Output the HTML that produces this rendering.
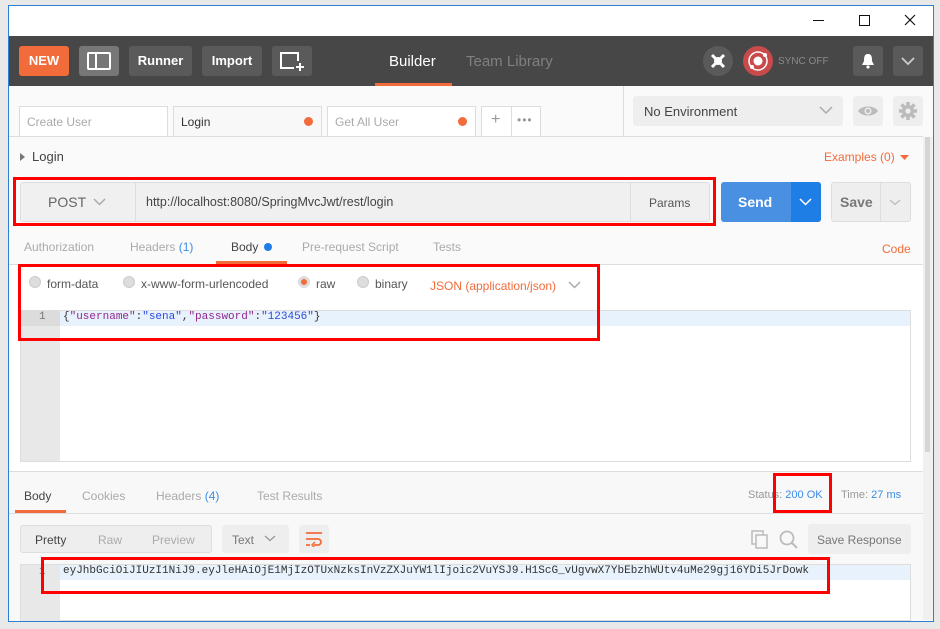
<!DOCTYPE html>
<html><head><style>
*{box-sizing:border-box;margin:0;padding:0}
body{width:940px;height:629px;background:#e9e9e9;font-family:"Liberation Sans",sans-serif;position:relative;overflow:hidden;font-size:12px;color:#505050}
.a{position:absolute}
.btn{position:absolute;height:30px;background:#5a5a5a;border-radius:3px;color:#fff;font-weight:bold;font-size:13px;text-align:center;line-height:30px}
.t{position:absolute;white-space:nowrap}
.rb{position:absolute;border:3px solid #f00}
.radio{position:absolute;width:12px;height:12px;border-radius:50%;background:#ddd;border:1px solid #ccc}
</style></head><body>
<div class="a" style="left:8px;top:5px;width:926px;height:617px;border:1px solid #2b7fd4;background:#fafafa"></div>
<div class="a" style="left:9px;top:6px;width:924px;height:30px;background:#fff"></div>
<div class="a" style="left:813px;top:20px;width:11px;height:1px;background:#111"></div>
<div class="a" style="left:859px;top:15px;width:11px;height:11px;border:1px solid #111"></div>
<svg class="a" style="left:904px;top:14px" width="12" height="12"><path d="M1 1L11 11M11 1L1 11" stroke="#111" stroke-width="1.2"/></svg>
<div class="a" style="left:9px;top:36px;width:924px;height:50px;background:#474747"></div>
<div class="btn" style="left:19px;top:46px;width:50px;background:#f26b3a">NEW</div>
<div class="btn" style="left:79px;top:46px;width:40px;background:#777"><div class="a" style="left:8px;top:6px;width:24px;height:18px;border:2px solid #fff;border-radius:2px"></div><div class="a" style="left:16px;top:7px;width:2px;height:16px;background:#fff"></div></div>
<div class="btn" style="left:129px;top:46px;width:63px">Runner</div>
<div class="btn" style="left:202px;top:46px;width:60px">Import</div>
<div class="btn" style="left:272px;top:46px;width:40px"><svg class="a" style="left:8px;top:6px" width="26" height="20"><path d="M14 16H1V1H18V9" stroke="#fff" stroke-width="2" fill="none"/><path d="M20 11v8M16 15h8" stroke="#fff" stroke-width="2"/></svg></div>
<div class="t" style="left:389px;top:53px;color:#fff;font-size:15px">Builder</div>
<div class="a" style="left:375px;top:83px;width:77px;height:3px;background:#f26b3a"></div>
<div class="t" style="left:466px;top:53px;color:#808080;font-size:15px">Team Library</div>
<div class="a" style="left:703px;top:46px;width:30px;height:30px;border-radius:50%;background:#5a5a5a"></div>
<svg class="a" style="left:703px;top:46px" width="30" height="30"><path d="M9 9L21 21M21 9L9 21" stroke="#fff" stroke-width="3"/><circle cx="15" cy="15" r="4" fill="#fff"/></svg>
<div class="a" style="left:743px;top:46px;width:30px;height:30px;border-radius:50%;background:#c94a4a"></div>
<svg class="a" style="left:743px;top:46px" width="30" height="30"><circle cx="15" cy="15" r="9" stroke="#fff" stroke-width="1.5" fill="none"/><circle cx="15" cy="15" r="4.5" fill="#fff"/><circle cx="22" cy="9" r="2" fill="#fff"/><circle cx="9" cy="21" r="2" fill="#fff"/></svg>
<div class="t" style="left:778px;top:56px;color:#8a8a8a;font-size:10px">SYNC OFF</div>
<div class="btn" style="left:853px;top:46px;width:30px"><svg class="a" style="left:8px;top:7px" width="14" height="16"><path d="M7 1C3 1 3 5 3 8L1 12H13L11 8C11 5 11 1 7 1Z" fill="#fff"/><circle cx="7" cy="14" r="1.6" fill="#fff"/></svg></div>
<div class="btn" style="left:893px;top:46px;width:30px"><svg class="a" style="left:8px;top:10px" width="14" height="10"><path d="M1 2L7 8L13 2" stroke="#ccc" stroke-width="1.8" fill="none"/></svg></div>
<div class="a" style="left:19px;top:106px;width:149px;height:31px;background:#fff;border:1px solid #ddd;border-bottom:none"></div>
<div class="t" style="left:27px;top:115px;color:#aaa">Create User</div>
<div class="a" style="left:173px;top:106px;width:149px;height:31px;background:#f8f8f8;border:1px solid #ddd;border-bottom:none"></div>
<div class="t" style="left:181px;top:115px;color:#333">Login</div>
<div class="a" style="left:304px;top:117px;width:9px;height:9px;border-radius:50%;background:#f26b3a"></div>
<div class="a" style="left:327px;top:106px;width:149px;height:31px;background:#fff;border:1px solid #ddd;border-bottom:none"></div>
<div class="t" style="left:335px;top:115px;color:#aaa">Get All User</div>
<div class="a" style="left:458px;top:117px;width:9px;height:9px;border-radius:50%;background:#f26b3a"></div>
<div class="a" style="left:481px;top:106px;width:60px;height:31px;background:#fff;border:1px solid #ddd;border-bottom:none"></div>
<div class="a" style="left:511px;top:106px;width:1px;height:31px;background:#ddd"></div>
<div class="t" style="left:491px;top:111px;color:#999;font-size:16px">+</div>
<div class="t" style="left:517px;top:113px;color:#999;font-size:12px;letter-spacing:1px">•••</div>
<div class="a" style="left:623px;top:86px;width:1px;height:51px;background:#ddd"></div>
<div class="a" style="left:9px;top:136px;width:914px;height:1px;background:#ddd"></div>
<div class="a" style="left:633px;top:96px;width:210px;height:30px;background:#eee;border-radius:3px"></div>
<div class="t" style="left:644px;top:104px;color:#444;font-size:13px">No Environment</div>
<svg class="a" style="left:819px;top:106px" width="14" height="9"><path d="M1 1L7 7L13 1" stroke="#aaa" stroke-width="1.5" fill="none"/></svg>
<div class="a" style="left:853px;top:96px;width:30px;height:30px;background:#eee;border-radius:3px"></div>
<svg class="a" style="left:857px;top:104px" width="22" height="14"><path d="M1 7C5 1 17 1 21 7C17 13 5 13 1 7Z" fill="#bbb"/><circle cx="11" cy="7" r="3.5" fill="#eee"/><circle cx="11" cy="7" r="2" fill="#bbb"/></svg>
<div class="a" style="left:893px;top:96px;width:30px;height:30px;background:#eee;border-radius:3px"></div>
<svg class="a" style="left:899px;top:102px" width="18" height="18"><circle cx="9" cy="9" r="6" fill="#bbb"/><path d="M9 0v18M0 9h18M2.5 2.5l13 13M15.5 2.5l-13 13" stroke="#bbb" stroke-width="3.5"/><circle cx="9" cy="9" r="2.6" fill="#eee"/></svg>
<div class="a" style="left:923px;top:137px;width:10px;height:483px;background:#f0f0f0"></div>
<div class="a" style="left:925px;top:137px;width:5px;height:315px;background:#d5d5d5"></div>
<svg class="a" style="left:20px;top:153px" width="6" height="8"><path d="M0 0L5 4L0 8Z" fill="#777"/></svg>
<div class="t" style="left:32px;top:149px;color:#444;font-size:13px">Login</div>
<div class="t" style="left:824px;top:150px;color:#f26b3a;font-size:12px">Examples (0)</div>
<svg class="a" style="left:900px;top:155px" width="9" height="6"><path d="M0 0H9L4.5 5Z" fill="#f26b3a"/></svg>
<div class="a" style="left:20px;top:182px;width:690px;height:40px;background:#f0f0f0;border:1px solid #ddd;border-radius:3px"></div>
<div class="a" style="left:135px;top:182px;width:1px;height:40px;background:#ddd"></div>
<div class="a" style="left:630px;top:182px;width:1px;height:40px;background:#ddd"></div>
<div class="t" style="left:48px;top:194px;color:#666;font-size:14px">POST</div>
<svg class="a" style="left:93px;top:198px" width="13" height="8"><path d="M1 1L6.5 6.5L12 1" stroke="#aaa" stroke-width="1.5" fill="none"/></svg>
<div class="t" style="left:146px;top:195px;color:#444;font-size:12.5px">http://localhost:8080/SpringMvcJwt/rest/login</div>
<div class="t" style="left:649px;top:196px;color:#555;font-size:12px">Params</div>
<div class="rb" style="left:13px;top:177px;width:703px;height:49px"></div>
<div class="a" style="left:721px;top:182px;width:100px;height:40px;background:#4a90e2;border-radius:3px"></div>
<div class="a" style="left:791px;top:182px;width:30px;height:40px;background:#1f7ee6;border-radius:0 3px 3px 0"></div>
<div class="t" style="left:738px;top:194px;color:#fff;font-size:14px;font-weight:bold">Send</div>
<svg class="a" style="left:799px;top:198px" width="13" height="8"><path d="M1 1L6.5 6.5L12 1" stroke="#fff" stroke-width="1.5" fill="none"/></svg>
<div class="a" style="left:831px;top:182px;width:80px;height:40px;background:#eee;border:1px solid #ddd;border-radius:3px"></div>
<div class="a" style="left:880px;top:182px;width:1px;height:40px;background:#ddd"></div>
<div class="t" style="left:840px;top:194px;color:#777;font-size:14px;font-weight:bold">Save</div>
<svg class="a" style="left:889px;top:199px" width="12" height="7"><path d="M1 1L6 5.5L11 1" stroke="#bbb" stroke-width="1.2" fill="none"/></svg>
<div class="t" style="left:24px;top:240px;color:#aaa">Authorization</div>
<div class="t" style="left:130px;top:240px;color:#aaa">Headers <span style="color:#3a8ee6">(1)</span></div>
<div class="t" style="left:231px;top:240px;color:#444">Body</div>
<div class="a" style="left:264px;top:243px;width:8px;height:8px;border-radius:50%;background:#1f7ee6"></div>
<div class="t" style="left:302px;top:240px;color:#aaa">Pre-request Script</div>
<div class="t" style="left:433px;top:240px;color:#aaa">Tests</div>
<div class="t" style="left:882px;top:242px;color:#f26b3a">Code</div>
<div class="a" style="left:216px;top:261px;width:71px;height:3px;background:#f26b3a"></div>
<div class="a" style="left:9px;top:264px;width:914px;height:1px;background:#ddd"></div>
<div class="a" style="left:9px;top:265px;width:914px;height:206px;background:#fff"></div>
<div class="radio" style="left:29px;top:276px"></div><div class="t" style="left:47px;top:277px;color:#555">form-data</div>
<div class="radio" style="left:123px;top:276px"></div><div class="t" style="left:141px;top:277px;color:#555">x-www-form-urlencoded</div>
<div class="radio" style="left:298px;top:276px;background:#f26b3a;border:3px solid #ddd"></div><div class="t" style="left:316px;top:277px;color:#555">raw</div>
<div class="radio" style="left:357px;top:276px"></div><div class="t" style="left:375px;top:277px;color:#555">binary</div>
<div class="t" style="left:430px;top:279px;color:#f26b3a">JSON (application/json)</div>
<svg class="a" style="left:568px;top:281px" width="13" height="8"><path d="M1 1L6.5 6.5L12 1" stroke="#aaa" stroke-width="1.5" fill="none"/></svg>
<div class="a" style="left:20px;top:310px;width:891px;height:152px;border:1px solid #ddd;background:#fff"></div>
<div class="a" style="left:21px;top:311px;width:39px;height:150px;background:#e8e8e8"></div>
<div class="a" style="left:60px;top:311px;width:850px;height:15px;background:#e8f2fc"></div>
<div class="a" style="left:21px;top:311px;width:39px;height:15px;background:#dcdcdc"></div>
<div class="t" style="left:39px;top:311px;color:#777;font-family:'Liberation Mono',monospace;font-size:11px">1</div>
<div class="t" style="left:63px;top:311px;font-family:'Liberation Mono',monospace;font-size:11px;color:#333">{<span style="color:#92278f">"username"</span>:<span style="color:#2a4ae0">"sena"</span>,<span style="color:#92278f">"password"</span>:<span style="color:#2a4ae0">"123456"</span>}</div>
<div class="rb" style="left:18px;top:264px;width:582px;height:77px"></div>
<div class="a" style="left:9px;top:471px;width:914px;height:1px;background:#ddd"></div>
<div class="a" style="left:9px;top:472px;width:914px;height:148px;background:#f8f8f8"></div>
<div class="t" style="left:24px;top:489px;color:#444">Body</div>
<div class="t" style="left:82px;top:489px;color:#aaa">Cookies</div>
<div class="t" style="left:156px;top:489px;color:#aaa">Headers <span style="color:#3a8ee6">(4)</span></div>
<div class="t" style="left:257px;top:489px;color:#aaa">Test Results</div>
<div class="a" style="left:15px;top:510px;width:51px;height:3px;background:#f26b3a"></div>
<div class="a" style="left:9px;top:513px;width:914px;height:1px;background:#ddd"></div>
<div class="t" style="left:748px;top:489px;color:#999;font-size:11px">Status: <span style="color:#3a8ee6">200 OK</span></div>
<div class="t" style="left:841px;top:489px;color:#999;font-size:11px">Time: <span style="color:#3a8ee6">27 ms</span></div>
<div class="rb" style="left:773px;top:473px;width:59px;height:40px"></div>
<div class="a" style="left:20px;top:525px;width:192px;height:28px;background:#eee;border:1px solid #ddd;border-radius:3px"></div>
<div class="t" style="left:35px;top:533px;color:#444">Pretty</div>
<div class="t" style="left:98px;top:533px;color:#aaa">Raw</div>
<div class="t" style="left:152px;top:533px;color:#aaa">Preview</div>
<div class="a" style="left:222px;top:525px;width:67px;height:28px;background:#eee;border-radius:3px"></div>
<div class="t" style="left:232px;top:533px;color:#777">Text</div>
<svg class="a" style="left:264px;top:535px" width="12" height="7"><path d="M1 1L6 5.5L11 1" stroke="#999" stroke-width="1.3" fill="none"/></svg>
<div class="a" style="left:299px;top:525px;width:30px;height:28px;background:#eee;border-radius:3px"></div>
<svg class="a" style="left:305px;top:531px" width="18" height="16"><path d="M1 2H17M1 8H13a3 3 0 0 1 0 6H9M1 14H5" stroke="#f26b3a" stroke-width="1.8" fill="none"/><path d="M10 11L7 14L10 17" stroke="#f26b3a" stroke-width="1.5" fill="none"/></svg>
<svg class="a" style="left:751px;top:530px" width="18" height="19"><rect x="1" y="1" width="11" height="13" fill="none" stroke="#bbb" stroke-width="1.5"/><rect x="5" y="5" width="11" height="13" fill="#f8f8f8" stroke="#bbb" stroke-width="1.5"/></svg>
<svg class="a" style="left:779px;top:530px" width="20" height="20"><circle cx="8" cy="8" r="6.5" fill="none" stroke="#bbb" stroke-width="1.8"/><path d="M13 13L18 18" stroke="#bbb" stroke-width="2"/></svg>
<div class="a" style="left:808px;top:524px;width:103px;height:30px;background:#eee;border-radius:3px"></div>
<div class="t" style="left:817px;top:533px;color:#777">Save Response</div>
<div class="a" style="left:20px;top:564px;width:891px;height:57px;border:1px solid #ddd;background:#fff"></div>
<div class="a" style="left:21px;top:565px;width:39px;height:56px;background:#e8e8e8"></div>
<div class="a" style="left:60px;top:565px;width:850px;height:15px;background:#e8f2fc"></div>
<div class="t" style="left:39px;top:566px;color:#777;font-family:'Liberation Mono',monospace;font-size:11px">1</div>
<div class="t" style="left:63px;top:565px;font-family:'Liberation Mono',monospace;font-size:11px;color:#333">eyJhbGciOiJIUzI1NiJ9.eyJleHAiOjE1MjIzOTUxNzksInVzZXJuYW1lIjoic2VuYSJ9.H1ScG_vUgvwX7YbEbzhWUtv4uMe29gj16YDi5JrDowk</div>
<div class="rb" style="left:41px;top:557px;width:789px;height:37px"></div>
</body></html>
